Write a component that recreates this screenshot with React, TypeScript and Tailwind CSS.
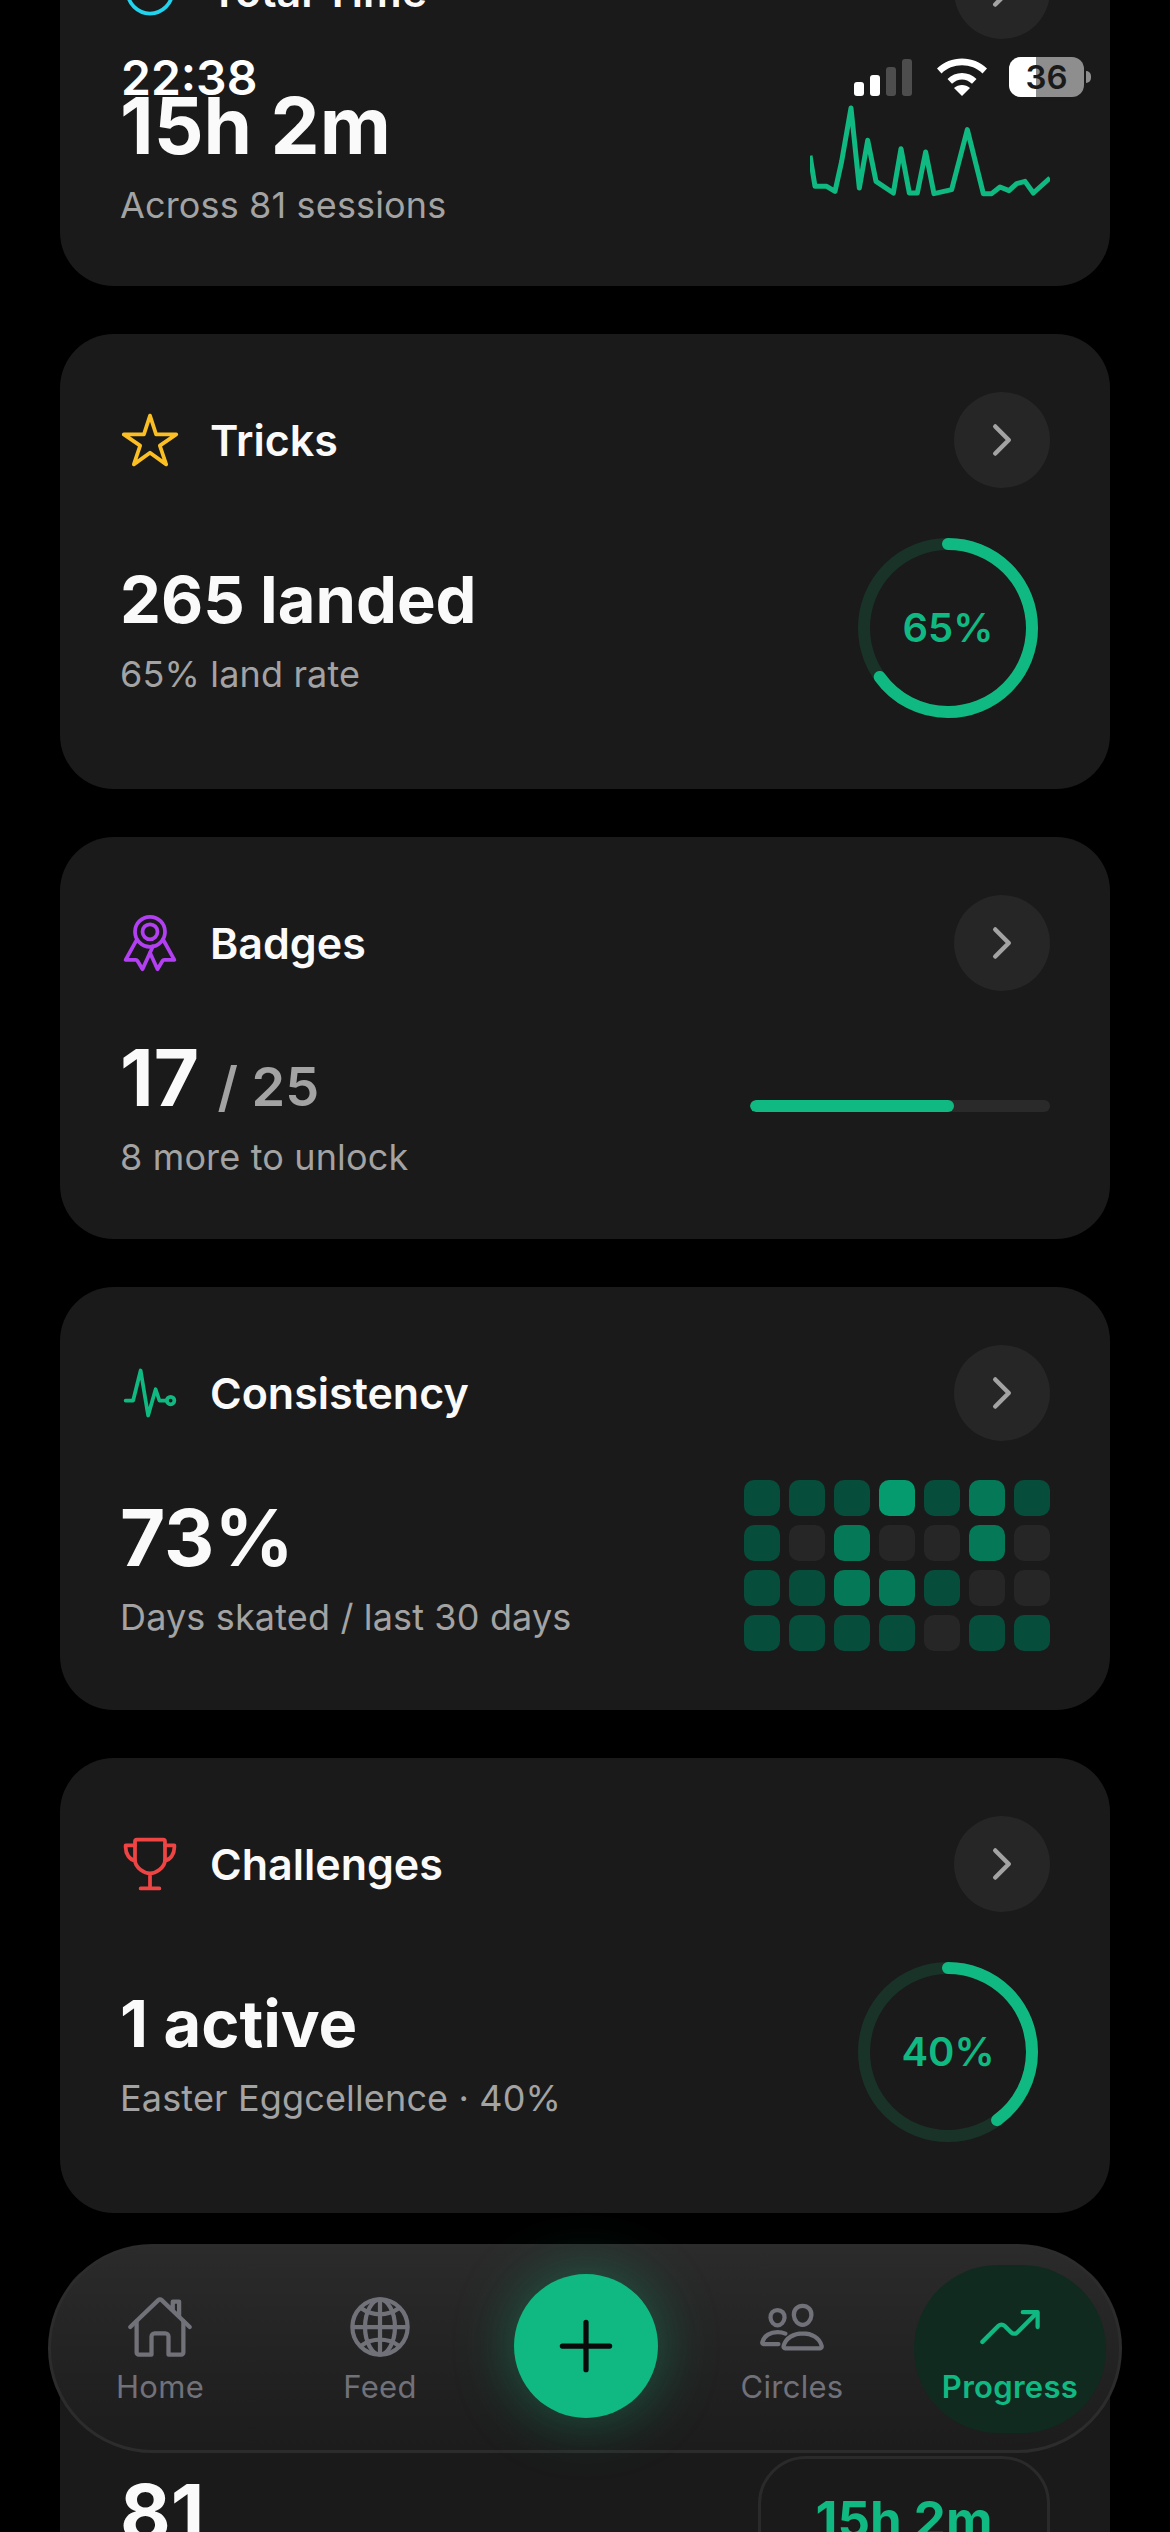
import type { ReactNode } from 'react';
import {
  IoAdd,
  IoChevronForward,
  IoGlobeOutline,
  IoHomeOutline,
  IoPeopleOutline,
  IoPulseOutline,
  IoRibbonOutline,
  IoStarOutline,
  IoTimeOutline,
  IoTrendingUpOutline,
  IoTrophyOutline,
} from 'react-icons/io5';

const grid = ['dddbdmd', 'demeeme', 'ddmmdee', 'ddddedd'];

const cellColor: Record<string, string> = {
  b: 'bg-[#059b6f]',
  m: 'bg-[#047857]',
  d: 'bg-[#064e3b]',
  e: 'bg-[#262626]',
};

function Card({
  icon,
  title,
  className,
  children,
}: {
  icon: ReactNode;
  title: string;
  className: string;
  children: ReactNode;
}) {
  return (
    <section className={`rounded-[54px] bg-[#1a1a1a] px-[60px] pt-[58px] ${className}`}>
      <div className="flex items-center justify-between">
        <div className="flex items-center gap-[30px]">
          <span className="flex h-[60px] w-[60px] items-center justify-center">{icon}</span>
          <h2 className="text-[43px] font-semibold leading-[56px] text-[#fafafa]">{title}</h2>
        </div>
        <button className="flex h-[96px] w-[96px] items-center justify-center rounded-full bg-[#262626] text-[#a3a3a3]">
          <IoChevronForward size={48} />
        </button>
      </div>
      {children}
    </section>
  );
}

function Stat({ value, sub, small }: { value: ReactNode; sub: string; small?: boolean }) {
  return (
    <div>
      <div
        className={
          small
            ? 'text-[65px] font-bold leading-[84px] text-[#fafafa]'
            : 'text-[78px] font-bold leading-[94px] text-[#fafafa]'
        }
      >
        {value}
      </div>
      <div className="mt-[8px] text-[36px] leading-[48px] tracking-[0.15px] text-[#a3a3a3]">{sub}</div>
    </div>
  );
}

function Ring({ percent }: { percent: number }) {
  const c = 2 * Math.PI * 84;
  return (
    <div className="relative mr-[12px] h-[180px] w-[180px]">
      <svg viewBox="0 0 180 180" className="h-full w-full -rotate-90">
        <circle cx="90" cy="90" r="84" fill="none" stroke="#1a3329" strokeWidth="12" />
        <circle
          cx="90"
          cy="90"
          r="84"
          fill="none"
          stroke="#10b981"
          strokeWidth="12"
          strokeLinecap="round"
          strokeDasharray={`${(c * percent) / 100} ${c}`}
        />
      </svg>
      <div className="absolute inset-0 flex items-center justify-center text-[40px] font-semibold text-[#10b981]">
        {percent}%
      </div>
    </div>
  );
}

function NavItem({ icon, label }: { icon: ReactNode; label: string }) {
  return (
    <div className="flex w-[192px] flex-col items-center text-[#71717a]">
      <span className="flex h-[72px] items-center justify-center">{icon}</span>
      <span className="mt-[4px] text-[31px] leading-[40px] tracking-[0.3px]">{label}</span>
    </div>
  );
}

function StatusBar() {
  return (
    <div className="absolute left-0 right-0 top-[50px] flex items-start justify-between pl-[121px] pr-[79px] text-white">
      <span className="text-[48px] font-semibold leading-[56px]">22:38</span>
      <div className="mt-[7px] flex items-center">
        <div className="flex items-end gap-[6px]">
          <span className="h-[14px] w-[10px] rounded-[3px] bg-white" />
          <span className="h-[21px] w-[10px] rounded-[3px] bg-white" />
          <span className="h-[29px] w-[10px] rounded-[3px] bg-[#4d4d4d]" />
          <span className="h-[37px] w-[10px] rounded-[3px] bg-[#4d4d4d]" />
        </div>
        <svg viewBox="0 0 50 38" className="ml-[25px] h-[38px] w-[50px]" fill="white">
          <path d="M0 10.5C13-3 37-3 50 10.5L45.5 15.5C35 4.5 15 4.5 4.5 15.5Z" />
          <path d="M10.5 21C18 13 32 13 39.5 21L35 25.7C29 20 21 20 15 25.7Z" />
          <path d="M25 38L17 30C21.5 26 28.5 26 33 30Z" />
        </svg>
        <div className="relative ml-[22px] flex h-[40px] w-[75px] items-center justify-center overflow-hidden rounded-[12px] bg-[#8e8e8e]">
          <span className="absolute bottom-0 left-0 top-0 w-[27px] bg-white" />
          <span className="relative text-[33px] font-semibold leading-none text-[#1a1a1a]">36</span>
        </div>
        <span className="ml-[2px] h-[12px] w-[5px] rounded-r-full bg-[#8e8e8e]" />
      </div>
    </div>
  );
}

export default function App() {
  return (
    <div className="relative h-[2532px] w-[1170px] overflow-hidden bg-black font-['Inter',sans-serif]">
      <div className="-mt-[115px] flex flex-col gap-[48px] px-[60px]">
        {/* Total Time */}
        <Card
          icon={<IoTimeOutline size={60} className="text-[#22d3ee]" />}
          title="Total Time"
          className="h-[401px]"
        >
          <div className="mt-[40px] flex items-start justify-between">
            <Stat value="15h 2m" sub="Across 81 sessions" />
            <svg viewBox="90 190 720 285" className="mt-[24px] h-[95px] w-[240px]" fill="none">
              <path
                d="M90 348L105 440L140 440L165 455L185 365L213 205L238 445L263 302L288 425L340 460L363 327L388 460L412 460L437 337L462 462L515 450L562 270L610 462L635 462L660 442L687 453L710 432L735 425L760 460L810 415"
                stroke="#10b981"
                strokeWidth="15"
                strokeLinejoin="round"
              />
            </svg>
          </div>
        </Card>

        {/* Tricks */}
        <Card
          icon={<IoStarOutline size={60} className="text-[#fbbf24]" />}
          title="Tricks"
          className="h-[455px]"
        >
          <div className="mt-[50px] flex items-center justify-between">
            <Stat small value="265 landed" sub="65% land rate" />
            <Ring percent={65} />
          </div>
        </Card>

        {/* Badges */}
        <Card
          icon={<IoRibbonOutline size={60} className="text-[#b23ff2]" />}
          title="Badges"
          className="h-[402px]"
        >
          <div className="mt-[40px] flex items-center justify-between">
            <Stat
              value={
                <>
                  17 <span className="text-[54px] font-semibold leading-none text-[#a3a3a3]">/ 25</span>
                </>
              }
              sub="8 more to unlock"
            />
            <div className="h-[12px] w-[300px] overflow-hidden rounded-full bg-[#2a2a2a]">
              <div className="h-full w-[68%] rounded-full bg-[#10b981]" />
            </div>
          </div>
        </Card>

        {/* Consistency */}
        <Card
          icon={<IoPulseOutline size={60} className="text-[#10b981]" />}
          title="Consistency"
          className="h-[423px]"
        >
          <div className="mt-[39px] flex items-center justify-between">
            <Stat value="73%" sub="Days skated / last 30 days" />
            <div className="grid grid-cols-7 gap-[9px]">
              {grid.join('').split('').map((c, i) => (
                <span key={i} className={`h-[36px] w-[36px] rounded-[10px] ${cellColor[c]}`} />
              ))}
            </div>
          </div>
        </Card>

        {/* Challenges */}
        <Card
          icon={<IoTrophyOutline size={60} className="text-[#ef4444]" />}
          title="Challenges"
          className="h-[455px]"
        >
          <div className="mt-[50px] flex items-center justify-between">
            <Stat small value="1 active" sub="Easter Eggcellence · 40%" />
            <Ring percent={40} />
          </div>
        </Card>

        {/* Sessions, mostly behind the tab bar */}
        <Card
          icon={<IoTimeOutline size={60} className="text-[#10b981]" />}
          title="Sessions"
          className="h-[455px]"
        >
          <div className="mt-[41px] flex items-start justify-between">
            <div className="mt-[10px] text-[78px] font-bold leading-[94px] text-[#fafafa]">81</div>
            <div className="flex h-[140px] w-[292px] justify-center rounded-[48px] border-[3px] border-[#2a2a2a] pt-[31px] text-[51px] font-bold leading-[60px] text-[#10b981]">
              15h 2m
            </div>
          </div>
        </Card>
      </div>

      <StatusBar />

      {/* Tab bar */}
      <nav className="absolute left-[48px] top-[2244px] flex h-[209px] w-[1074px] items-center rounded-full border-[3px] border-[#2c2c2c] bg-gradient-to-b from-[#2b2b2b] to-[#1c1c1c] pl-[13px] pr-[13px]">
        <NavItem icon={<IoHomeOutline size={68} />} label="Home" />
        <span className="ml-[28px]">
          <NavItem icon={<IoGlobeOutline size={68} />} label="Feed" />
        </span>
        <button className="mx-auto mb-[5px] flex h-[144px] w-[144px] items-center justify-center rounded-full bg-[#10b981] text-[#0a0a0a] shadow-[0_0_60px_rgba(16,185,129,0.4)]">
          <IoAdd size={84} />
        </button>
        <span className="mr-[26px]">
          <NavItem icon={<IoPeopleOutline size={68} />} label="Circles" />
        </span>
        <div className="flex h-[168px] w-[192px] flex-col items-center justify-center rounded-[84px] bg-[#112a1f] text-[#10b981]">
          <span className="flex h-[72px] items-center justify-center">
            <IoTrendingUpOutline size={68} />
          </span>
          <span className="mt-[4px] text-[31px] font-semibold leading-[40px] tracking-[0.3px]">Progress</span>
        </div>
      </nav>
    </div>
  );
}
